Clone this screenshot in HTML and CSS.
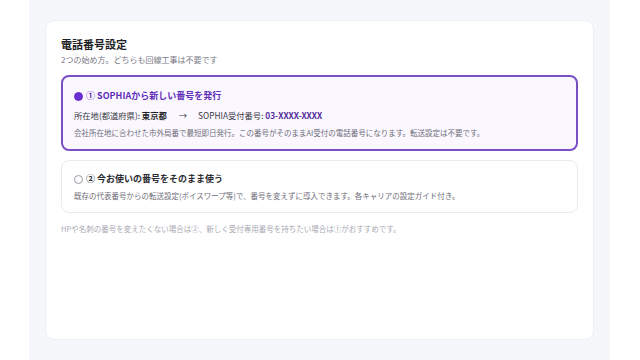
FILE: index.html
```html
<!DOCTYPE html>
<html lang="ja">
<head>
    <meta charset="UTF-8">
    <meta name="viewport" content="width=device-width, initial-scale=1.0">
    <title>電話番号設定</title>
    <link rel="stylesheet" href="styles.css">
</head>
<body>
    <div class="panel">
        <div class="card">
            <h1>電話番号設定</h1>
            <p class="sub">2つの始め方。どちらも回線工事は不要です</p>

            <div class="option selected">
                <div class="opt-title"><span class="radio on"></span>① SOPHIAから新しい番号を発行</div>
                <div class="opt-line">所在地(都道府県): <b>東京都</b><span class="arrow">→</span>SOPHIA受付番号: <b class="num">03-XXXX-XXXX</b></div>
                <div class="opt-desc">会社所在地に合わせた市外局番で最短即日発行。この番号がそのままAI受付の電話番号になります。転送設定は不要です。</div>
            </div>

            <div class="option">
                <div class="opt-title"><span class="radio"></span>② 今お使いの番号をそのまま使う</div>
                <div class="opt-desc first">既存の代表番号からの転送設定(ボイスワープ等)で、番号を変えずに導入できます。各キャリアの設定ガイド付き。</div>
            </div>

            <p class="note">HPや名刺の番号を変えたくない場合は②、新しく受付専用番号を持ちたい場合は①がおすすめです。</p>
        </div>
    </div>
</body>
</html>
```

FILE: styles.css
```css
body {
    margin: 0;
    padding: 0;
    background-color: #ffffff;
    font-family: "Noto Sans CJK JP", "Noto Sans", sans-serif;
    color: #2b2b33;
}
.panel {
    margin: 0 30px 0 29px;
    height: 360px;
    box-sizing: border-box;
    padding: 20px 16px 0;
    background-color: #f5f7fb;
}
.card {
    height: 320px;
    box-sizing: border-box;
    background-color: #ffffff;
    border: 1px solid #eceff4;
    border-radius: 9px;
    padding: 15px 15px;
}
.card h1 {
    margin: 0;
    font-size: 11px;
    line-height: 16px;
    font-weight: 700;
    color: #1f1f26;
}
.sub {
    margin: 2px 0 0;
    font-size: 8px;
    line-height: 11px;
    color: #7a7a85;
}
.option {
    border: 1px solid #ebebef;
    border-radius: 8px;
    background-color: #ffffff;
    padding: 11px 12px 11px;
    margin-top: 9px;
}
.option.selected {
    margin-top: 10px;
    border: 2px solid #7b4fc4;
    background-color: #fbf7ff;
    padding: 12px 11px 11px;
}
.opt-title {
    display: flex;
    align-items: center;
    font-size: 9px;
    line-height: 14px;
    font-weight: 700;
    color: #2b2b33;
}
.selected .opt-title {
    color: #5f2fb8;
}
.radio {
    width: 7px;
    height: 7px;
    border-radius: 50%;
    border: 1px solid #9a9aa5;
    background-color: #ffffff;
    margin-right: 3px;
}
.radio.on {
    border-color: #6a2fd0;
    background-color: #6a2fd0;
}
.opt-line {
    margin-top: 6px;
    font-size: 8.3px;
    line-height: 12px;
    color: #3a3a44;
}
.opt-line b {
    font-weight: 700;
    color: #1f1f26;
}
.opt-line .num {
    color: #4f2c9a;
}
.arrow {
    margin: 0 11px 0 12px;
}
.opt-desc {
    margin-top: 6px;
    font-size: 7.5px;
    line-height: 11px;
    color: #6e6e78;
}
.opt-desc.first {
    margin-top: 4px;
}
.note {
    margin: 10px 0 0;
    font-size: 7.5px;
    line-height: 11px;
    color: #a9a9b2;
}
```
